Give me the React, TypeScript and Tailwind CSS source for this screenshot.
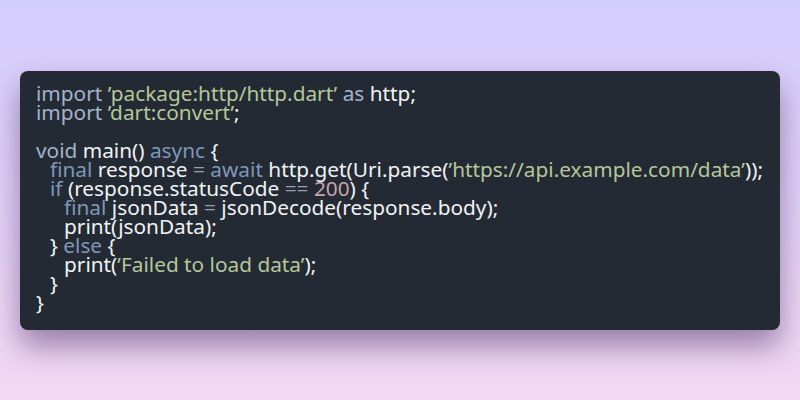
const kw = "text-[#a3b3cc]"
const kw2 = "text-[#7f97b8]"
const str = "text-[#b5c79a]"
const op = "text-[#9aa3ad]"
const num = "text-[#c9a3ad]"

type Tok = [string, string?]

// indent level, tokens
const lines: [number, Tok[]][] = [
  [0, [["import", kw], [" "], ["’package:http/http.dart’", str], [" "], ["as", kw], [" http;"]]],
  [0, [["import", kw], [" "], ["’dart:convert’", str], [";"]]],
  [0, []],
  [0, [["void", kw], [" main() "], ["async", kw2], [" {"]]],
  [1, [["final", kw2], [" response "], ["=", op], [" "], ["await", kw2], [" http.get(Uri.parse("], ["’https://api.example.com/data’", str], ["));"]]],
  [1, [["if", kw2], [" (response.statusCode "], ["==", op], [" "], ["200", num], [") {"]]],
  [2, [["final", kw2], [" jsonData "], ["=", op], [" jsonDecode(response.body);"]]],
  [2, [["print(jsonData);"]]],
  [1, [["} "], ["else", kw2], [" {"]]],
  [2, [["print("], ["’Failed to load data’", str], [");"]]],
  [1, [["}"]]],
  [0, [["}"]]],
]

const indents = ["pl-0", "pl-[14px]", "pl-[28px]"]

export default function App() {
  return (
    <div className="flex h-[400px] w-[800px] items-center justify-center bg-gradient-to-b from-[#d3cdfd] to-[#f3d8f4] px-5">
      <div className="h-[259px] w-full rounded-lg bg-[#232a33] px-4 py-[13px] shadow-[0_16px_30px_rgba(70,40,90,0.5)]">
        <pre className="font-['Noto_Sans',sans-serif] text-[20.8px] leading-[19px] text-[#f0f2f4]">
          {lines.map(([ind, l], i) => (
            <div key={i} className={`h-[19px] whitespace-pre ${indents[ind]}`}>
              {l.map(([t, c], j) => (
                <span key={j} className={c}>
                  {t}
                </span>
              ))}
            </div>
          ))}
        </pre>
      </div>
    </div>
  )
}
